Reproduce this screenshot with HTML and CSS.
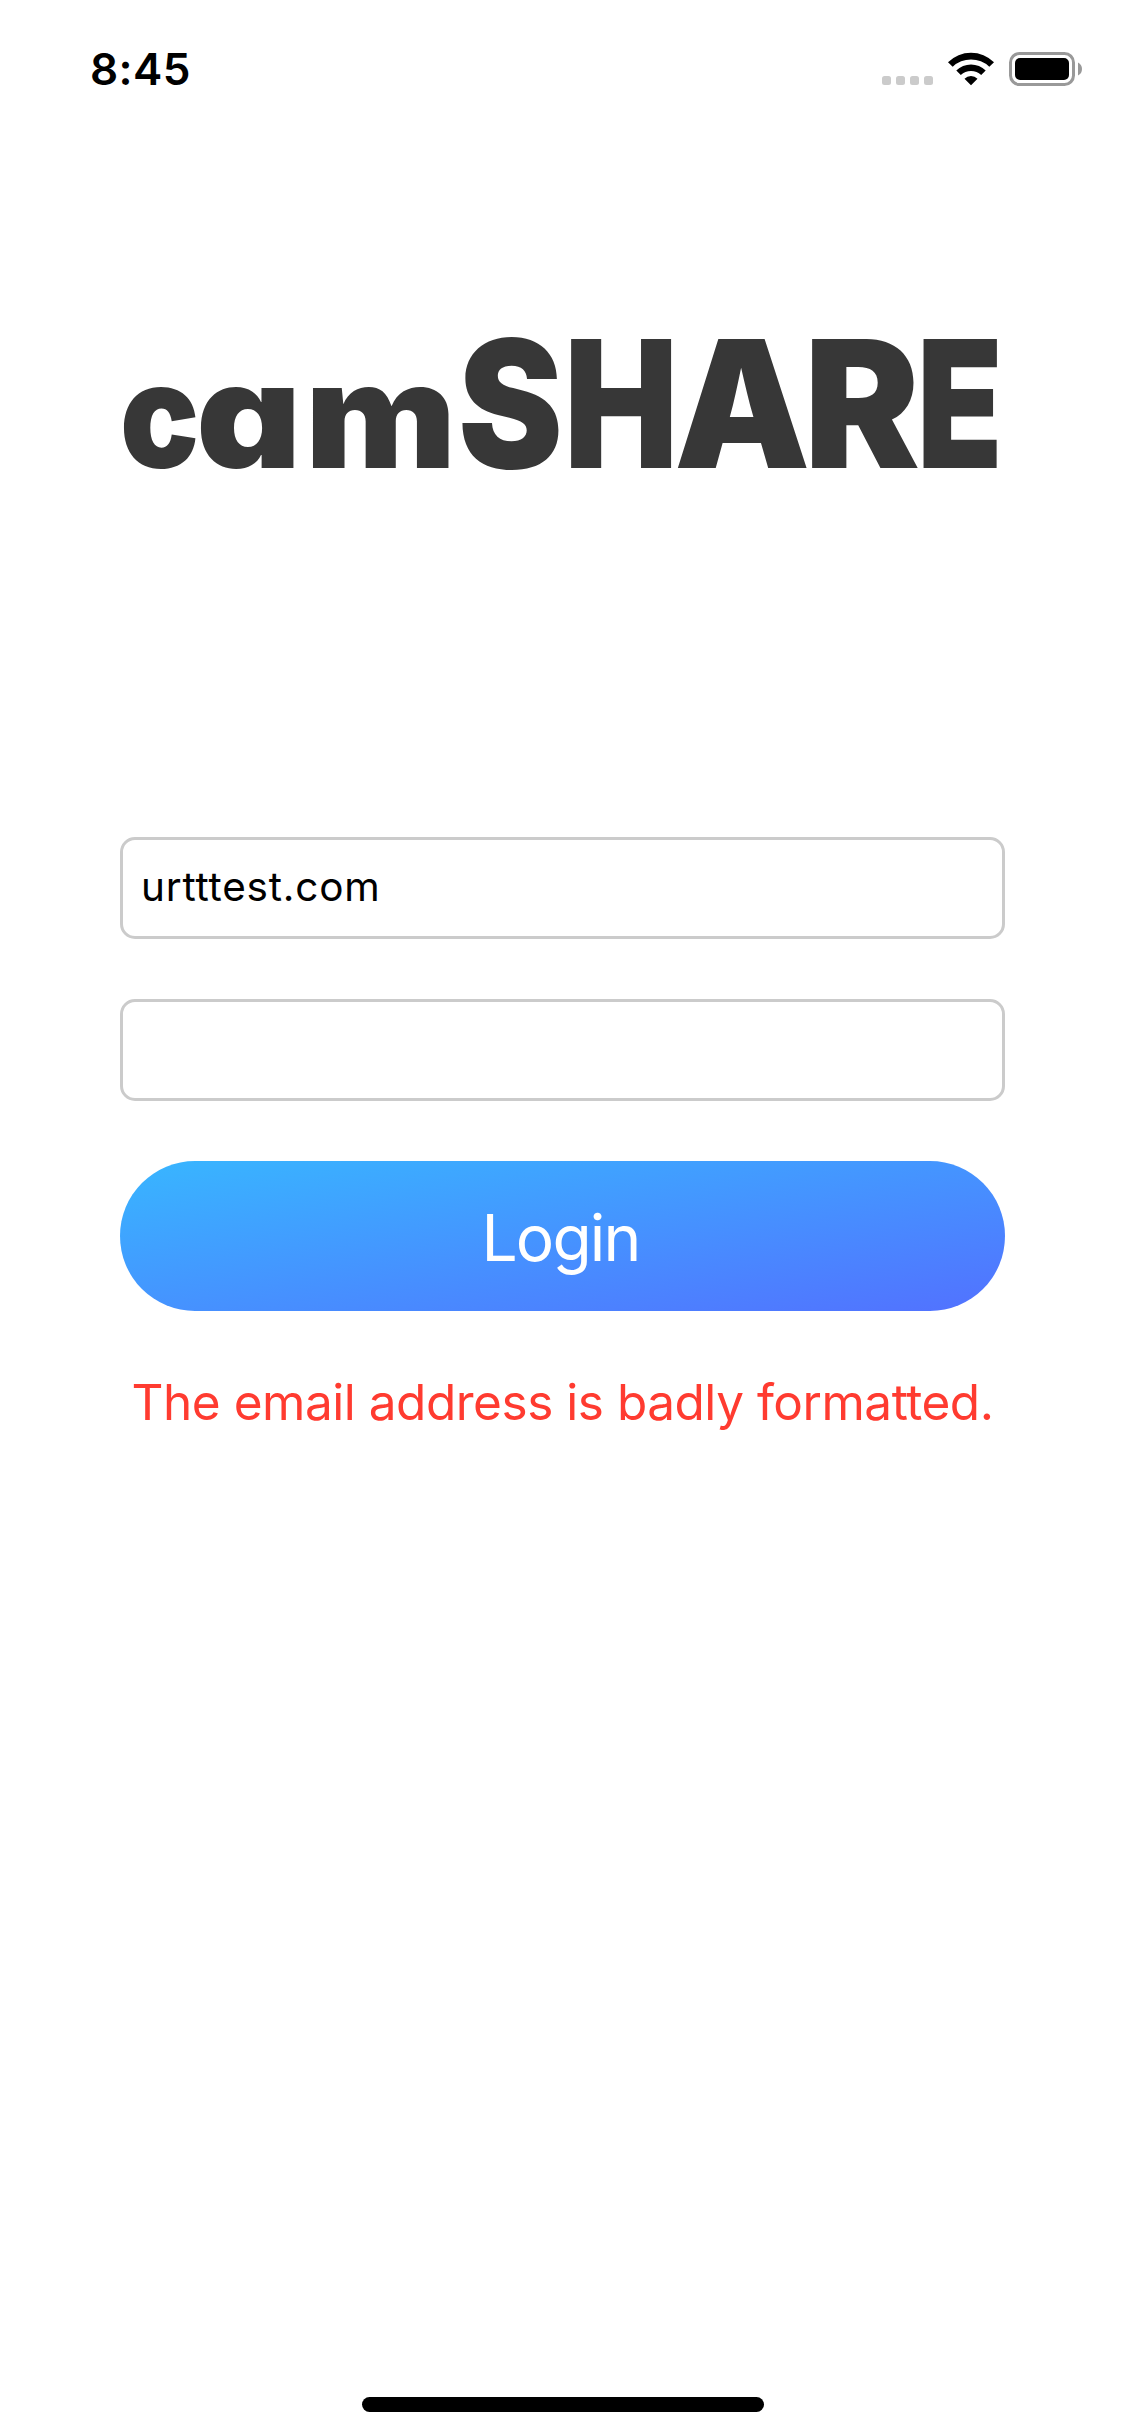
FILE: index.html
```html
<!DOCTYPE html>
<html lang="en">
<head>
<meta charset="utf-8">
<title>camSHARE</title>
<link rel="stylesheet" href="styles.css">
</head>
<body>
<main class="screen">
  <header class="status">
    <span class="time">8:45</span>
    <svg class="indicators" width="201" height="36" viewBox="0 0 201 36">
      <g fill="#cbcbcb">
        <rect x="0" y="25" width="9" height="9" rx="2.5"/>
        <rect x="14" y="25" width="9" height="9" rx="2.5"/>
        <rect x="28" y="25" width="9" height="9" rx="2.5"/>
        <rect x="42" y="25" width="9" height="9" rx="2.5"/>
      </g>
      <path d="M66 11.2A32.5 32.5 0 0 1 112 11.2L107.300 15.800A26.500 26.500 0 0 0 70.700 15.800ZM74.300 19.500A21 21 0 0 1 103.700 19.500L99.200 24A14.700 14.700 0 0 0 78.800 24ZM82.500 27.700A9.300 9.300 0 0 1 95.500 27.700L89 34.200Z"/>
      <rect x="128.500" y="2.500" width="63" height="31" rx="9" fill="none" stroke="#999" stroke-width="3"/>
      <rect x="133" y="7" width="54" height="22" rx="5"/>
      <path d="M196 11.500Q200 13.500 200 18T196 24.500Z" fill="#999"/>
    </svg>
  </header>
  <h1 class="logo"><span class="small l-c">c</span><span class="small l-a">a</span><span class="small l-m">m</span><span class="l-s">S</span><span class="l-h">H</span><span class="l-a2">A</span><span class="l-r">R</span><span class="l-e">E</span></h1>
  <form class="form">
    <input class="field" type="text" value="urtttest.com" aria-label="Email">
    <input class="field" type="password" aria-label="Password">
    <button class="login" type="button">Login</button>
  </form>
  <p class="error">The email address is badly formatted.</p>
  <div class="home-bar"></div>
</main>
</body>
</html>
```

FILE: styles.css
```css
* {
  box-sizing: border-box;
}

body {
  margin: 0;
  background: #fff;
  font-family: Inter, "Liberation Sans", sans-serif;
  color: #000;
}

.screen {
  width: 1125px;
  height: 2436px;
  display: flex;
  flex-direction: column;
  align-items: center;
  padding-bottom: 24px;
}

.status {
  width: 100%;
  height: 132px;
  display: flex;
  justify-content: space-between;
  align-items: flex-start;
  padding: 51px 42px 0 90px;
}

.time {
  font-size: 44px;
  line-height: 36px;
  font-weight: 600;
  letter-spacing: 0.4px;
}

/* Wordmark: each letter has its own advance and horizontal scale */
.logo {
  width: 885px;
  height: 180px;
  margin: 182px 0 0;
  display: flex;
  align-items: baseline;
  color: #373737;
  font-size: 177px;
  line-height: 180px;
  font-weight: 900;
  font-feature-settings: "cv11";
}

.logo span {
  flex: none;
  transform-origin: 0 50%;
}

.logo .small {
  font-size: 146px;
}

.l-c {
  width: 76px;
  transform: scaleX(0.9);
}

.l-a {
  width: 109px;
  transform: scaleX(1.12);
}

.l-m {
  width: 153px;
  transform: scaleX(1.1);
}

.l-s {
  width: 105.5px;
  transform: scaleX(0.89);
}

.l-h {
  width: 110.5px;
  transform: scaleX(0.86);
}

.l-a2 {
  width: 130px;
  transform: scaleX(0.97);
}

.l-r {
  width: 112.5px;
  transform: scaleX(0.98);
}

.l-e {
  width: 89px;
  transform: scaleX(0.79);
}

.form {
  width: 885px;
  margin-top: 343px;
  display: flex;
  flex-direction: column;
  gap: 60px;
}

.field {
  width: 100%;
  height: 102px;
  padding: 0 18px 4px;
  border: 3px solid #cbcbcb;
  border-radius: 15px;
  background: #fff;
  font: 400 40.5px Inter, "Liberation Sans", sans-serif;
  letter-spacing: 0.8px;
  color: #000;
  outline: none;
}

.login {
  height: 150px;
  padding: 2px 4px 0 0;
  border: 0;
  border-radius: 75px;
  background: linear-gradient(to bottom right, #38b6ff, #5271ff);
  font: 400 64px Inter, "Liberation Sans", sans-serif;
  letter-spacing: -1.8px;
  color: #fff;
}

.error {
  margin: 60px 0 0;
  font-size: 49.5px;
  line-height: 62px;
  letter-spacing: -0.47px;
  white-space: nowrap;
  color: #ff3b30;
}

.home-bar {
  width: 402px;
  height: 15px;
  margin-top: auto;
  border-radius: 8px;
  background: #000;
}
```
